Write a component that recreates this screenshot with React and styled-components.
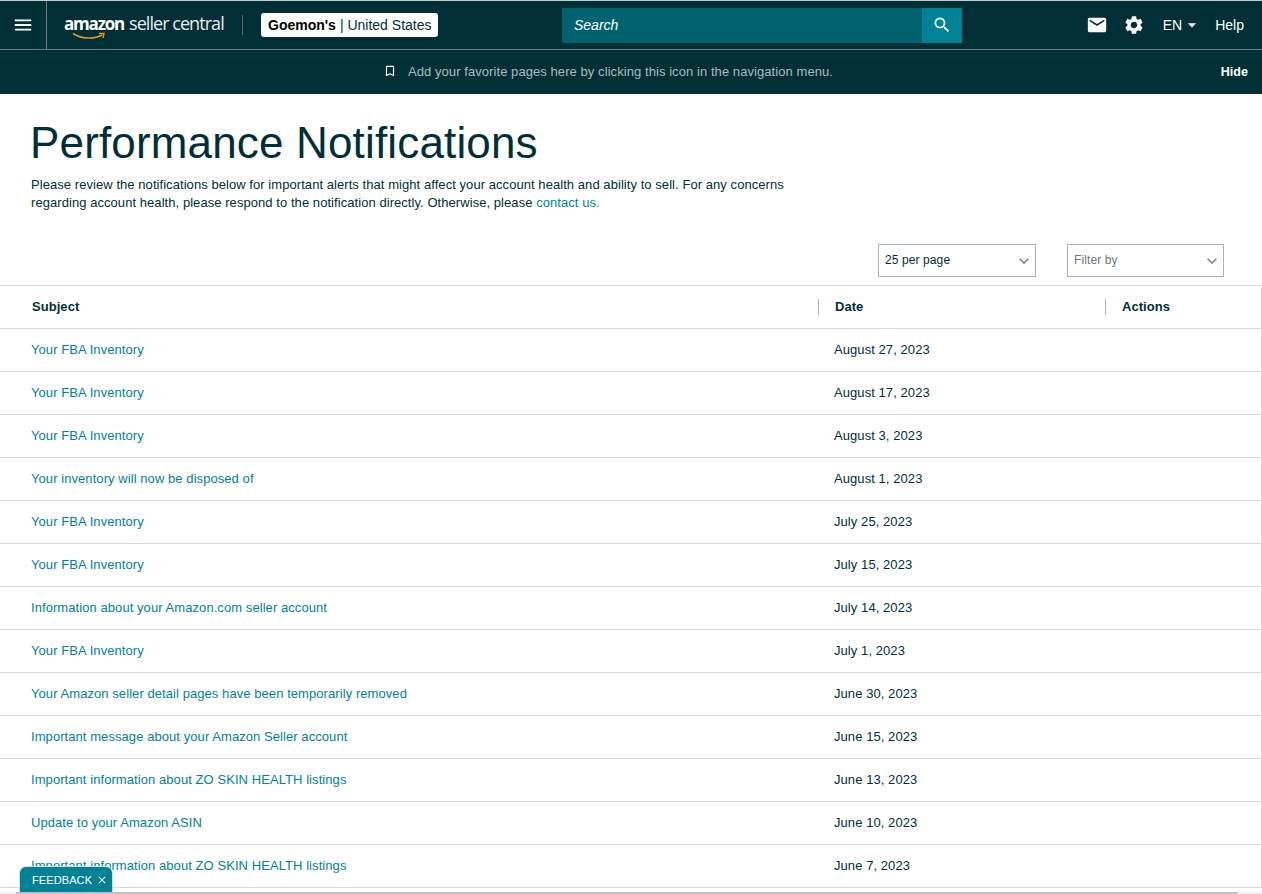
import React from 'react'
import styled, { createGlobalStyle } from 'styled-components'
import { MdMenu, MdEmail, MdSettings, MdSearch, MdBookmarkBorder, MdExpandMore, MdClose, MdArrowDropDown } from 'react-icons/md'

const notifications = [
  ['Your FBA Inventory', 'August 27, 2023'],
  ['Your FBA Inventory', 'August 17, 2023'],
  ['Your FBA Inventory', 'August 3, 2023'],
  ['Your inventory will now be disposed of', 'August 1, 2023'],
  ['Your FBA Inventory', 'July 25, 2023'],
  ['Your FBA Inventory', 'July 15, 2023'],
  ['Information about your Amazon.com seller account', 'July 14, 2023'],
  ['Your FBA Inventory', 'July 1, 2023'],
  ['Your Amazon seller detail pages have been temporarily removed', 'June 30, 2023'],
  ['Important message about your Amazon Seller account', 'June 15, 2023'],
  ['Important information about ZO SKIN HEALTH listings', 'June 13, 2023'],
  ['Update to your Amazon ASIN', 'June 10, 2023'],
  ['Important information about ZO SKIN HEALTH listings', 'June 7, 2023'],
]

const GlobalStyle = createGlobalStyle`
  html, body {
    margin: 0;
    height: 894px;
    overflow: hidden;
    background: #fff;
    font-family: "Liberation Sans", Arial, sans-serif;
    color: #002f36;
  }
`

const Page = styled.div`
  position: relative;
  height: 894px;
  overflow: hidden;
`

const TopBar = styled.header`
  display: flex;
  align-items: center;
  height: 48px;
  border-top: 1px solid #c8cccc;
  border-bottom: 1px solid #6c8185;
  background: #002f36;
  color: #fff;
`

const MenuButton = styled.div`
  display: flex;
  align-items: center;
  justify-content: center;
  width: 46px;
  height: 100%;
  border-right: 1px solid #6c8185;
  font-size: 22px;
`

const Logo = styled.div`
  position: relative;
  display: flex;
  align-items: baseline;
  width: 160px;
  margin-left: 17px;
  color: #fff;
  white-space: nowrap;
  transform: translateY(-2px);
`

const LogoBold = styled.span`
  font-family: "Open Sans", sans-serif;
  font-size: 17px;
  font-weight: 700;
  letter-spacing: -1.2px;
`

const LogoLight = styled.span`
  margin-left: 5px;
  font-family: "Open Sans", sans-serif;
  font-size: 18px;
  font-weight: 400;
  letter-spacing: -0.95px;
  color: #e6ebeb;
`

const Smile = styled.svg`
  position: absolute;
  left: 8px;
  top: 21px;
`

const Divider = styled.div`
  width: 1px;
  height: 20px;
  margin: 0 18px;
  background: #56696d;
`

const AccountBadge = styled.div`
  display: flex;
  align-items: center;
  gap: 4px;
  box-sizing: border-box;
  width: 177px;
  height: 24px;
  padding-left: 7px;
  border-radius: 3px;
  background: #fff;
  color: #002f36;
  font-size: 14px;
  white-space: nowrap;

  b {
    color: #000;
    font-weight: 700;
  }
`

const SearchBox = styled.div`
  display: flex;
  width: 400px;
  height: 35px;
  margin-left: 124px;
`

const SearchField = styled.div`
  flex: 1;
  padding-left: 12px;
  background: #00626f;
  color: #fff;
  font-size: 14px;
  font-style: italic;
  line-height: 35px;
`

const SearchButton = styled.div`
  display: flex;
  align-items: center;
  justify-content: center;
  width: 40px;
  background: #008296;
  font-size: 20px;
`

const RightNav = styled.nav`
  display: flex;
  align-items: center;
  margin-left: auto;
  padding-right: 18px;
  font-size: 14px;
`

const NavIcon = styled.span`
  display: flex;
  margin-right: ${p => p.$gap}px;
  font-size: 22px;
`

const Lang = styled.span`
  display: flex;
  align-items: center;
  margin-right: 13px;
  svg {
    margin-left: 0;
    font-size: 20px;
  }
`

const FavoritesBar = styled.div`
  display: flex;
  align-items: center;
  justify-content: center;
  position: relative;
  box-sizing: border-box;
  height: 44px;
  padding: 0 46px 2px 0;
  background: #002f36;
  color: #a9bcbf;
  font-size: 13px;
  letter-spacing: 0.07px;
  svg {
    margin-right: 11px;
    color: #fff;
    font-size: 14px;
  }
`

const HideLink = styled.span`
  position: absolute;
  right: 14px;
  margin-top: 2px;
  color: #fff;
  font-size: 12.5px;
  font-weight: 700;
`

const Intro = styled.section`
  padding: 24px 0 0 31px;
`

const Title = styled.h1`
  margin: 0 0 0 -1px;
  font-size: 44px;
  font-weight: 400;
  letter-spacing: 0.16px;
  line-height: 50px;
  color: #002f36;
`

const Lead = styled.p`
  width: 770px;
  margin: 8px 0 0;
  font-size: 13px;
  letter-spacing: 0.06px;
  line-height: 18px;
  color: #002f36;
  a {
    color: #008296;
    text-decoration: none;
  }
`

const Controls = styled.div`
  display: flex;
  justify-content: flex-end;
  gap: 31px;
  height: 33px;
  margin-top: 32px;
  padding-right: 38px;
`

const Select = styled.div`
  display: flex;
  align-items: center;
  justify-content: space-between;
  box-sizing: border-box;
  width: ${p => p.$width}px;
  height: 33px;
  padding: 0 1px 2px 6px;
  border: 1px solid #a6b2b4;
  color: ${p => (p.$muted ? '#6c7778' : '#002f36')};
  font-size: 12px;
  letter-spacing: 0.1px;
  svg {
    margin-top: 3px;
    color: #7f8c8e;
    font-size: 20px;
  }
`

const Table = styled.div`
  margin-top: 8px;
  border-top: 1px solid #d5dbdb;
  border-right: 1px solid #d5dbdb;
`

const Row = styled.div`
  display: grid;
  grid-template-columns: 818px 287px 1fr;
  align-items: center;
  height: 42px;
  border-bottom: 1px solid #d5dbdb;
`

const HeadCell = styled.div`
  height: 16px;
  padding-left: ${p => (p.$first ? 32 : 16)}px;
  border-left: ${p => (p.$first ? 'none' : '1px solid #a6b2b4')};
  font-size: 13px;
  font-weight: 700;
  letter-spacing: 0.05px;
  line-height: 15px;
  color: #002f36;
`

const SubjectLink = styled.a`
  margin-bottom: 2px;
  padding-left: 31px;
  color: #008296;
  font-size: 13px;
  letter-spacing: 0.07px;
  cursor: pointer;
`

const DateCell = styled.div`
  margin-bottom: 2px;
  padding-left: 16px;
  color: #002f36;
  font-size: 13px;
  letter-spacing: 0.07px;
`

const Feedback = styled.div`
  position: absolute;
  left: 20px;
  bottom: 2px;
  display: flex;
  align-items: center;
  gap: 4px;
  box-sizing: border-box;
  width: 92px;
  height: 25px;
  padding-left: 12px;
  border-radius: 6px 6px 0 0;
  background: #008296;
  box-shadow: 0 0 0 1px #d5dbdb;
  color: #fff;
  font-size: 11px;
  letter-spacing: 0.1px;
  svg {
    font-size: 12px;
  }
`

const ScrollTrack = styled.div`
  position: absolute;
  left: 0;
  right: 0;
  bottom: 0;
  height: 2px;
  background: #f1f1f1;
`

const ScrollThumb = styled.div`
  width: 1222px;
  height: 100%;
  margin-left: 16px;
  background: #c1c1c1;
`

export default function App() {
  return (
    <Page>
      <GlobalStyle />
      <TopBar>
        <MenuButton><MdMenu /></MenuButton>
        <Logo>
          <LogoBold>amazon</LogoBold>
          <LogoLight>seller central</LogoLight>
          <Smile width="34" height="10" viewBox="0 0 34 10">
            <path d="M1 1.5C9 7 22 7.5 30 3" fill="none" stroke="#e8952b" strokeWidth="1.6" />
            <path d="M27 1.5L32 1.5L31 6" fill="none" stroke="#e8952b" strokeWidth="1.4" />
          </Smile>
        </Logo>
        <Divider />
        <AccountBadge><b>Goemon's</b> | United States</AccountBadge>
        <SearchBox>
          <SearchField>Search</SearchField>
          <SearchButton><MdSearch /></SearchButton>
        </SearchBox>
        <RightNav>
          <NavIcon $gap={15}><MdEmail /></NavIcon>
          <NavIcon $gap={18}><MdSettings /></NavIcon>
          <Lang>EN<MdArrowDropDown /></Lang>
          <span>Help</span>
        </RightNav>
      </TopBar>
      <FavoritesBar>
        <MdBookmarkBorder />
        Add your favorite pages here by clicking this icon in the navigation menu.
        <HideLink>Hide</HideLink>
      </FavoritesBar>
      <Intro>
        <Title>Performance Notifications</Title>
        <Lead>
          Please review the notifications below for important alerts that might affect your account health and ability to sell. For any concerns regarding account health, please respond to the notification directly. Otherwise, please <a>contact us.</a>
        </Lead>
      </Intro>
      <Controls>
        <Select $width={158}>25 per page<MdExpandMore /></Select>
        <Select $width={157} $muted>Filter by<MdExpandMore /></Select>
      </Controls>
      <Table>
        <Row>
          <HeadCell $first>Subject</HeadCell>
          <HeadCell>Date</HeadCell>
          <HeadCell>Actions</HeadCell>
        </Row>
        {notifications.map(([subject, date], i) => (
          <Row key={i}>
            <SubjectLink>{subject}</SubjectLink>
            <DateCell>{date}</DateCell>
            <div />
          </Row>
        ))}
      </Table>
      <Feedback>FEEDBACK<MdClose /></Feedback>
      <ScrollTrack><ScrollThumb /></ScrollTrack>
    </Page>
  )
}
